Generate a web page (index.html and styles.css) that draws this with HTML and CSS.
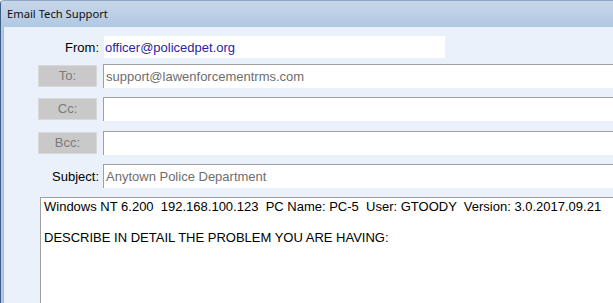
FILE: index.html
```html
<!DOCTYPE html>
<html>
<head>
<meta charset="utf-8">
<link rel="stylesheet" href="styles.css">
</head>
<body>
<div class="window">
  <div class="titlebar">Email Tech Support</div>
  <div class="frame">
    <div class="content">
      <div class="row row-from">
        <div class="label">From:</div>
        <div class="from-box">officer@policedpet.org</div>
      </div>
      <div class="row row-to">
        <div class="label"><span class="btn">To:</span></div>
        <div class="field">support@lawenforcementrms.com</div>
      </div>
      <div class="row row-cc">
        <div class="label"><span class="btn">Cc:</span></div>
        <div class="field"></div>
      </div>
      <div class="row row-bcc">
        <div class="label"><span class="btn">Bcc:</span></div>
        <div class="field"></div>
      </div>
      <div class="row row-subject">
        <div class="label">Subject:</div>
        <div class="field">Anytown Police Department</div>
      </div>
      <div class="body-area">
        <div class="line">Windows NT 6.200  192.168.100.123  PC Name: PC-5  User: GTOODY  Version: 3.0.2017.09.21</div>
        <div class="line">&nbsp;</div>
        <div class="line">DESCRIBE IN DETAIL THE PROBLEM YOU ARE HAVING:</div>
      </div>
    </div>
  </div>
</div>
</body>
</html>
```
FILE: styles.css
```css
html, body {
  margin: 0;
  padding: 0;
  width: 613px;
  height: 303px;
  overflow: hidden;
  background: #ffffff;
}

.window {
  width: 613px;
  height: 303px;
  display: flex;
  flex-direction: column;
  border-left: 1px solid #3d5d86;
  border-top: 1px solid #8ea6c4;
  border-top-left-radius: 4px;
  background: linear-gradient(#c9d9ec, #b3cae4 30px, #b3cae4);
  box-sizing: border-box;
  overflow: hidden;
}

.titlebar {
  height: 26px;
  flex: none;
  box-sizing: border-box;
  padding: 5px 0 0 6px;
  font-family: "Noto Sans", sans-serif;
  font-size: 11.2px;
  line-height: 16px;
  color: #101010;
  background: linear-gradient(#c7d7ea, #b1c8e2);
}

.frame {
  flex: 1;
  min-height: 0;
  padding-left: 2px;
  display: flex;
}

.content {
  flex: 1;
  min-height: 0;
  background: #eaf1fa;
  border-left: 1px solid #a9b8cc;
  display: flex;
  flex-direction: column;
  font-family: "Liberation Sans", Arial, sans-serif;
  font-size: 13px;
}

.row {
  display: grid;
  grid-template-columns: 95px 1fr;
  column-gap: 4px;
  align-items: center;
}

.row-from { margin-top: 9px; }
.row-to { margin-top: 6px; }
.row-cc { margin-top: 9px; }
.row-bcc { margin-top: 10px; }
.row-subject { margin-top: 9px; }

.label {
  text-align: right;
  color: #000;
  line-height: 15px;
  display: flex;
  justify-content: flex-end;
}

.row-from .label { padding-top: 1px; }

.from-box {
  height: 22px;
  width: 341px;
  margin-left: 1px;
  box-sizing: border-box;
  padding: 1px 0 0 1px;
  line-height: 21px;
  background: #ffffff;
  color: #2a1fa0;
}

.field {
  height: 24px;
  box-sizing: border-box;
  border-top: 1px solid #a0a0a0;
  border-left: 1px solid #a0a0a0;
  background: #ffffff;
  padding-left: 2px;
  line-height: 23px;
  color: #6e6e6e;
}

.btn {
  display: block;
  width: 59px;
  height: 22px;
  box-sizing: border-box;
  margin-right: 2px;
  background: #c9c9c9;
  border: 1px solid #d9d9d9;
  color: #7b7b7b;
  text-align: center;
  line-height: 20px;
}

.body-area {
  margin-top: 9px;
  margin-left: 36px;
  flex: 1;
  min-height: 0;
  background: #ffffff;
  border-top: 1px solid #a0a0a0;
  border-left: 1px solid #a0a0a0;
  padding: 1px 0 0 3px;
  color: #000;
}

.line {
  white-space: pre;
  line-height: 15.5px;
}
```
